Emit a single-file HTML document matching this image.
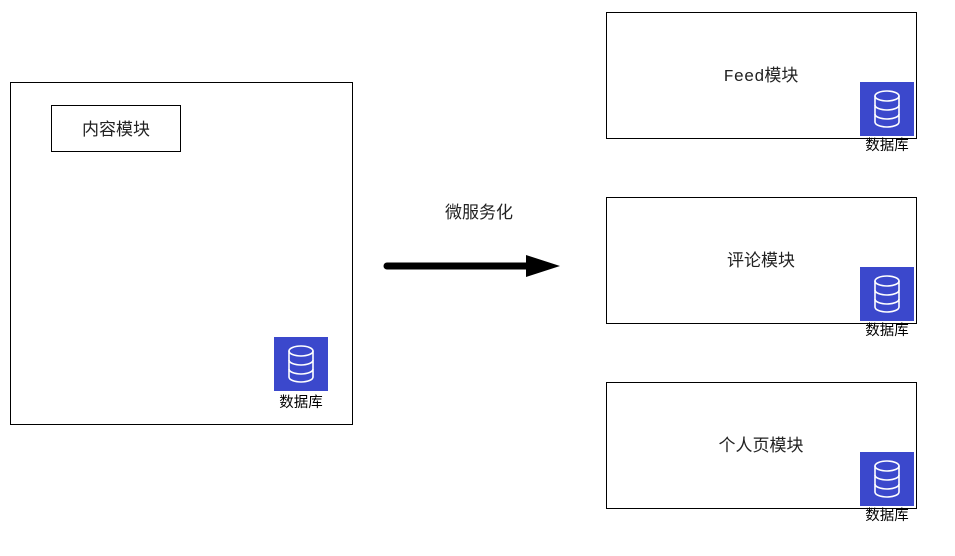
<!DOCTYPE html>
<html><head><meta charset="utf-8"><style>
html,body{margin:0;padding:0;background:#fff;}
svg{display:block;}
text{font-family:"Liberation Mono","Noto Sans CJK SC",monospace;fill:#222;}
</style></head><body>
<svg width="955" height="556" viewBox="0 0 955 556" xmlns="http://www.w3.org/2000/svg">
<defs>
<g id="db">
<rect x="0" y="0" width="54" height="54" fill="#3b48cc"/>
<g fill="none" stroke="#fff" stroke-width="1.6">
<ellipse cx="27" cy="14" rx="12" ry="5"/>
<path d="M15 14 V40 A12 5 0 0 0 39 40 V14"/>
<path d="M15 23 A12 5 0 0 0 39 23"/>
<path d="M15 32 A12 5 0 0 0 39 32"/>
</g>
</g>
</defs>
<rect x="10.5" y="82.5" width="342" height="342" fill="#fff" stroke="#000"/>
<rect x="51.5" y="105.5" width="129" height="46" fill="#fff" stroke="#000"/>
<text x="116" y="135" font-size="17" text-anchor="middle">内容模块</text>
<use href="#db" x="274" y="337"/>
<text x="301" y="407" font-size="14.5" text-anchor="middle" style="fill:#000">数据库</text>

<text x="479" y="218" font-size="17" text-anchor="middle">微服务化</text>
<line x1="387" y1="266" x2="530" y2="266" stroke="#000" stroke-width="7" stroke-linecap="round"/>
<polygon points="526,255 560,266 526,277" fill="#000"/>

<rect x="606.5" y="12.5" width="310" height="126" fill="#fff" stroke="#000"/>
<text x="761" y="81" font-size="17" text-anchor="middle">Feed模块</text>
<use href="#db" x="860" y="82"/>
<text x="887" y="150" font-size="14.5" text-anchor="middle" style="fill:#000">数据库</text>

<rect x="606.5" y="197.5" width="310" height="126" fill="#fff" stroke="#000"/>
<text x="761" y="266" font-size="17" text-anchor="middle">评论模块</text>
<use href="#db" x="860" y="267"/>
<text x="887" y="335" font-size="14.5" text-anchor="middle" style="fill:#000">数据库</text>

<rect x="606.5" y="382.5" width="310" height="126" fill="#fff" stroke="#000"/>
<text x="761" y="451" font-size="17" text-anchor="middle">个人页模块</text>
<use href="#db" x="860" y="452"/>
<text x="887" y="520" font-size="14.5" text-anchor="middle" style="fill:#000">数据库</text>
</svg>
</body></html>
